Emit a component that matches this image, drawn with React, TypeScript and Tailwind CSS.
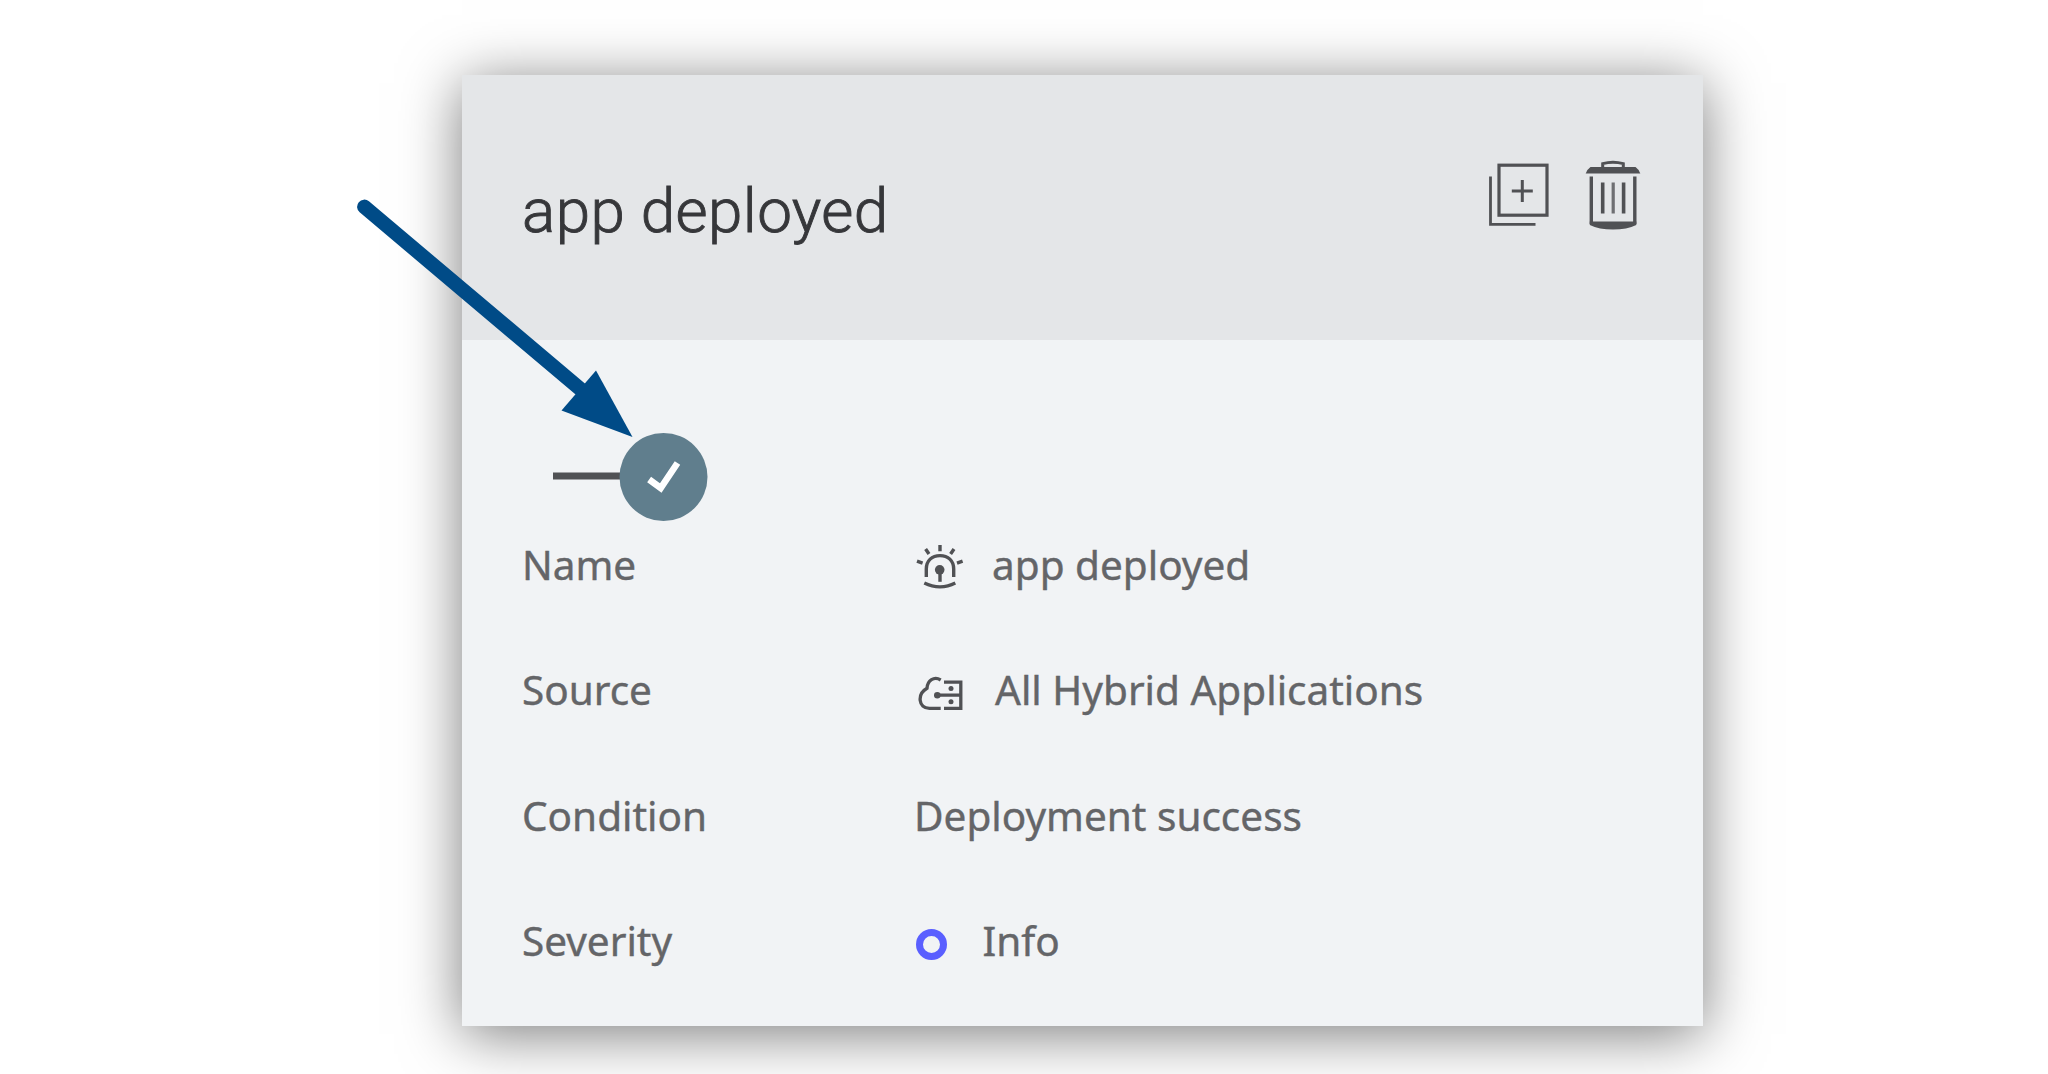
import type { ReactNode } from "react";

function CopyIcon() {
  return (
    <svg className="h-[64px] w-[60px] shrink-0" viewBox="0 0 60 64" fill="none" stroke="#505154">
      <rect x="10" y="2.2" width="48" height="50" strokeWidth="3.2" />
      <path d="M1.5 13.5V61.3H46.5" strokeWidth="2.8" />
      <path d="M33.3 17V39M22.8 28H43.8" strokeWidth="3" />
    </svg>
  );
}

function TrashIcon() {
  return (
    <svg className="h-[70px] w-[56px] shrink-0" viewBox="0 0 56 70" fill="none" stroke="#505154">
      <path d="M17.7 8V3.6Q28 0.7 38.3 3.6V8" strokeWidth="3" />
      <path d="M5.5 7H50.5Q53.5 9 55.3 13.4H0.7Q2.5 9 5.5 7Z" fill="#505154" stroke="none" />
      <path d="M6.3 16.5V64M49.8 16.5V64" strokeWidth="3.4" />
      <path d="M4.8 61.5H51.3V65Q42 69.6 28 69.6Q14 69.6 4.8 65Z" fill="#505154" stroke="none" />
      <path d="M17.7 22.5V53.5M38.6 22.5V53.5" strokeWidth="3.6" />
      <path d="M28.2 22.5V53.5" strokeWidth="3.2" stroke="#6e6f72" />
    </svg>
  );
}

function AlertIcon() {
  return (
    <svg className="h-[44px] w-[48px] shrink-0" viewBox="0 0 48 44" fill="none" stroke="#505154" strokeWidth="3.4">
      <path d="M10.3 32V24C10.3 15.5 16 10.6 24 10.6S37.7 15.5 37.7 24V32" />
      <path d="M8.3 38Q16 41.8 24 41.8T39.3 38" strokeWidth="3.2" />
      <circle cx="23.7" cy="24.8" r="4.8" fill="#505154" stroke="none" />
      <path d="M24 25V36.8" />
      <path d="M24 0V6.3M9.6 4L13 9M38 4L34.6 9M1 16.2L6.6 18.2M46.6 16.2L41 18.2" />
    </svg>
  );
}

function HybridAppIcon() {
  return (
    <svg className="h-[36px] w-[46px] shrink-0" viewBox="0 0 46 36" fill="none" stroke="#505154" strokeWidth="3.3">
      <path d="M22.7 4C16 0 9.5 4.5 9 12.3C-1 18 0 32.3 11.5 32.3H22.7" />
      <path d="M26 6.2H42.8V32.3H26M20 19.2H42" />
      <circle cx="19.3" cy="19.2" r="3.3" fill="#505154" stroke="none" />
      <circle cx="33" cy="12.6" r="2.5" fill="#505154" stroke="none" />
      <circle cx="33" cy="25.8" r="2.5" fill="#505154" stroke="none" />
    </svg>
  );
}

function Row({ label, children }: { label: string; children: ReactNode }) {
  return (
    <div className="flex h-[86px] items-center">
      <div className="w-[392px] shrink-0">{label}</div>
      <div className="flex items-center whitespace-nowrap">{children}</div>
    </div>
  );
}

function Arrow() {
  return (
    <svg className="pointer-events-none absolute left-[350px] top-[190px] h-[260px] w-[290px]" viewBox="350 190 290 260">
      <path d="M364.3 206.8L585 393" stroke="#004b87" strokeWidth="14.4" strokeLinecap="round" />
      <path d="M596 370.5L632.5 437L561.5 410.5Z" fill="#004b87" />
    </svg>
  );
}

export default function App() {
  return (
    <div className="relative h-[1074px] w-[2048px] overflow-hidden bg-white pl-[462px] pt-[75px]">
      <section className="h-[951px] w-[1241px] bg-[#f1f3f5] shadow-[0_8px_56px_rgba(0,0,0,0.52)]">
        <header className="flex h-[265px] items-start justify-between bg-[#e4e6e8] pl-[60px] pr-[62.5px]">
          <h1 className="mt-[94px] whitespace-nowrap font-[Roboto] text-[62px] font-light leading-[84px] tracking-[0.4px] text-[#36373a] [-webkit-text-stroke:0.9px_#36373a]">
            app deployed
          </h1>
          <div className="flex items-start gap-[36px] pt-[85px]">
            <div className="pt-[3px]">
              <CopyIcon />
            </div>
            <TrashIcon />
          </div>
        </header>
        <div className="pl-[60px] pt-[93px] font-['Noto_Sans'] text-[40.5px] leading-[56px] text-[#646568] [-webkit-text-stroke:0.4px_#646568]">
          <div className="flex h-[88px] items-center pl-[31px]">
            <div className="h-[7px] w-[68px] -translate-y-[1.5px] bg-[#505154]" />
            <div className="flex size-[88px] -translate-x-[1.5px] items-center justify-center rounded-full bg-[#607e8d]">
              <svg className="h-[32px] w-[34px]" viewBox="0 0 34 32" fill="none">
                <path d="M2.6 18.5L14.2 27L31 2" stroke="#fff" strokeWidth="6.6" />
              </svg>
            </div>
          </div>
          <div className="flex flex-col gap-[39.5px] pt-[0.5px]">
            <Row label="Name">
              <div className="mr-[28px] pl-[2px] pt-[5px]">
                <AlertIcon />
              </div>
              app deployed
            </Row>
            <Row label="Source">
              <div className="mr-[31px] pl-[4px] pt-[7px]">
                <HybridAppIcon />
              </div>
              All Hybrid Applications
            </Row>
            <Row label="Condition">Deployment success</Row>
            <Row label="Severity">
              <span className="ml-[1.5px] mr-[36px] mt-[6px] size-[31px] rounded-full border-[7px] border-[#5a5fff]" />
              Info
            </Row>
          </div>
        </div>
      </section>
      <Arrow />
    </div>
  );
}
